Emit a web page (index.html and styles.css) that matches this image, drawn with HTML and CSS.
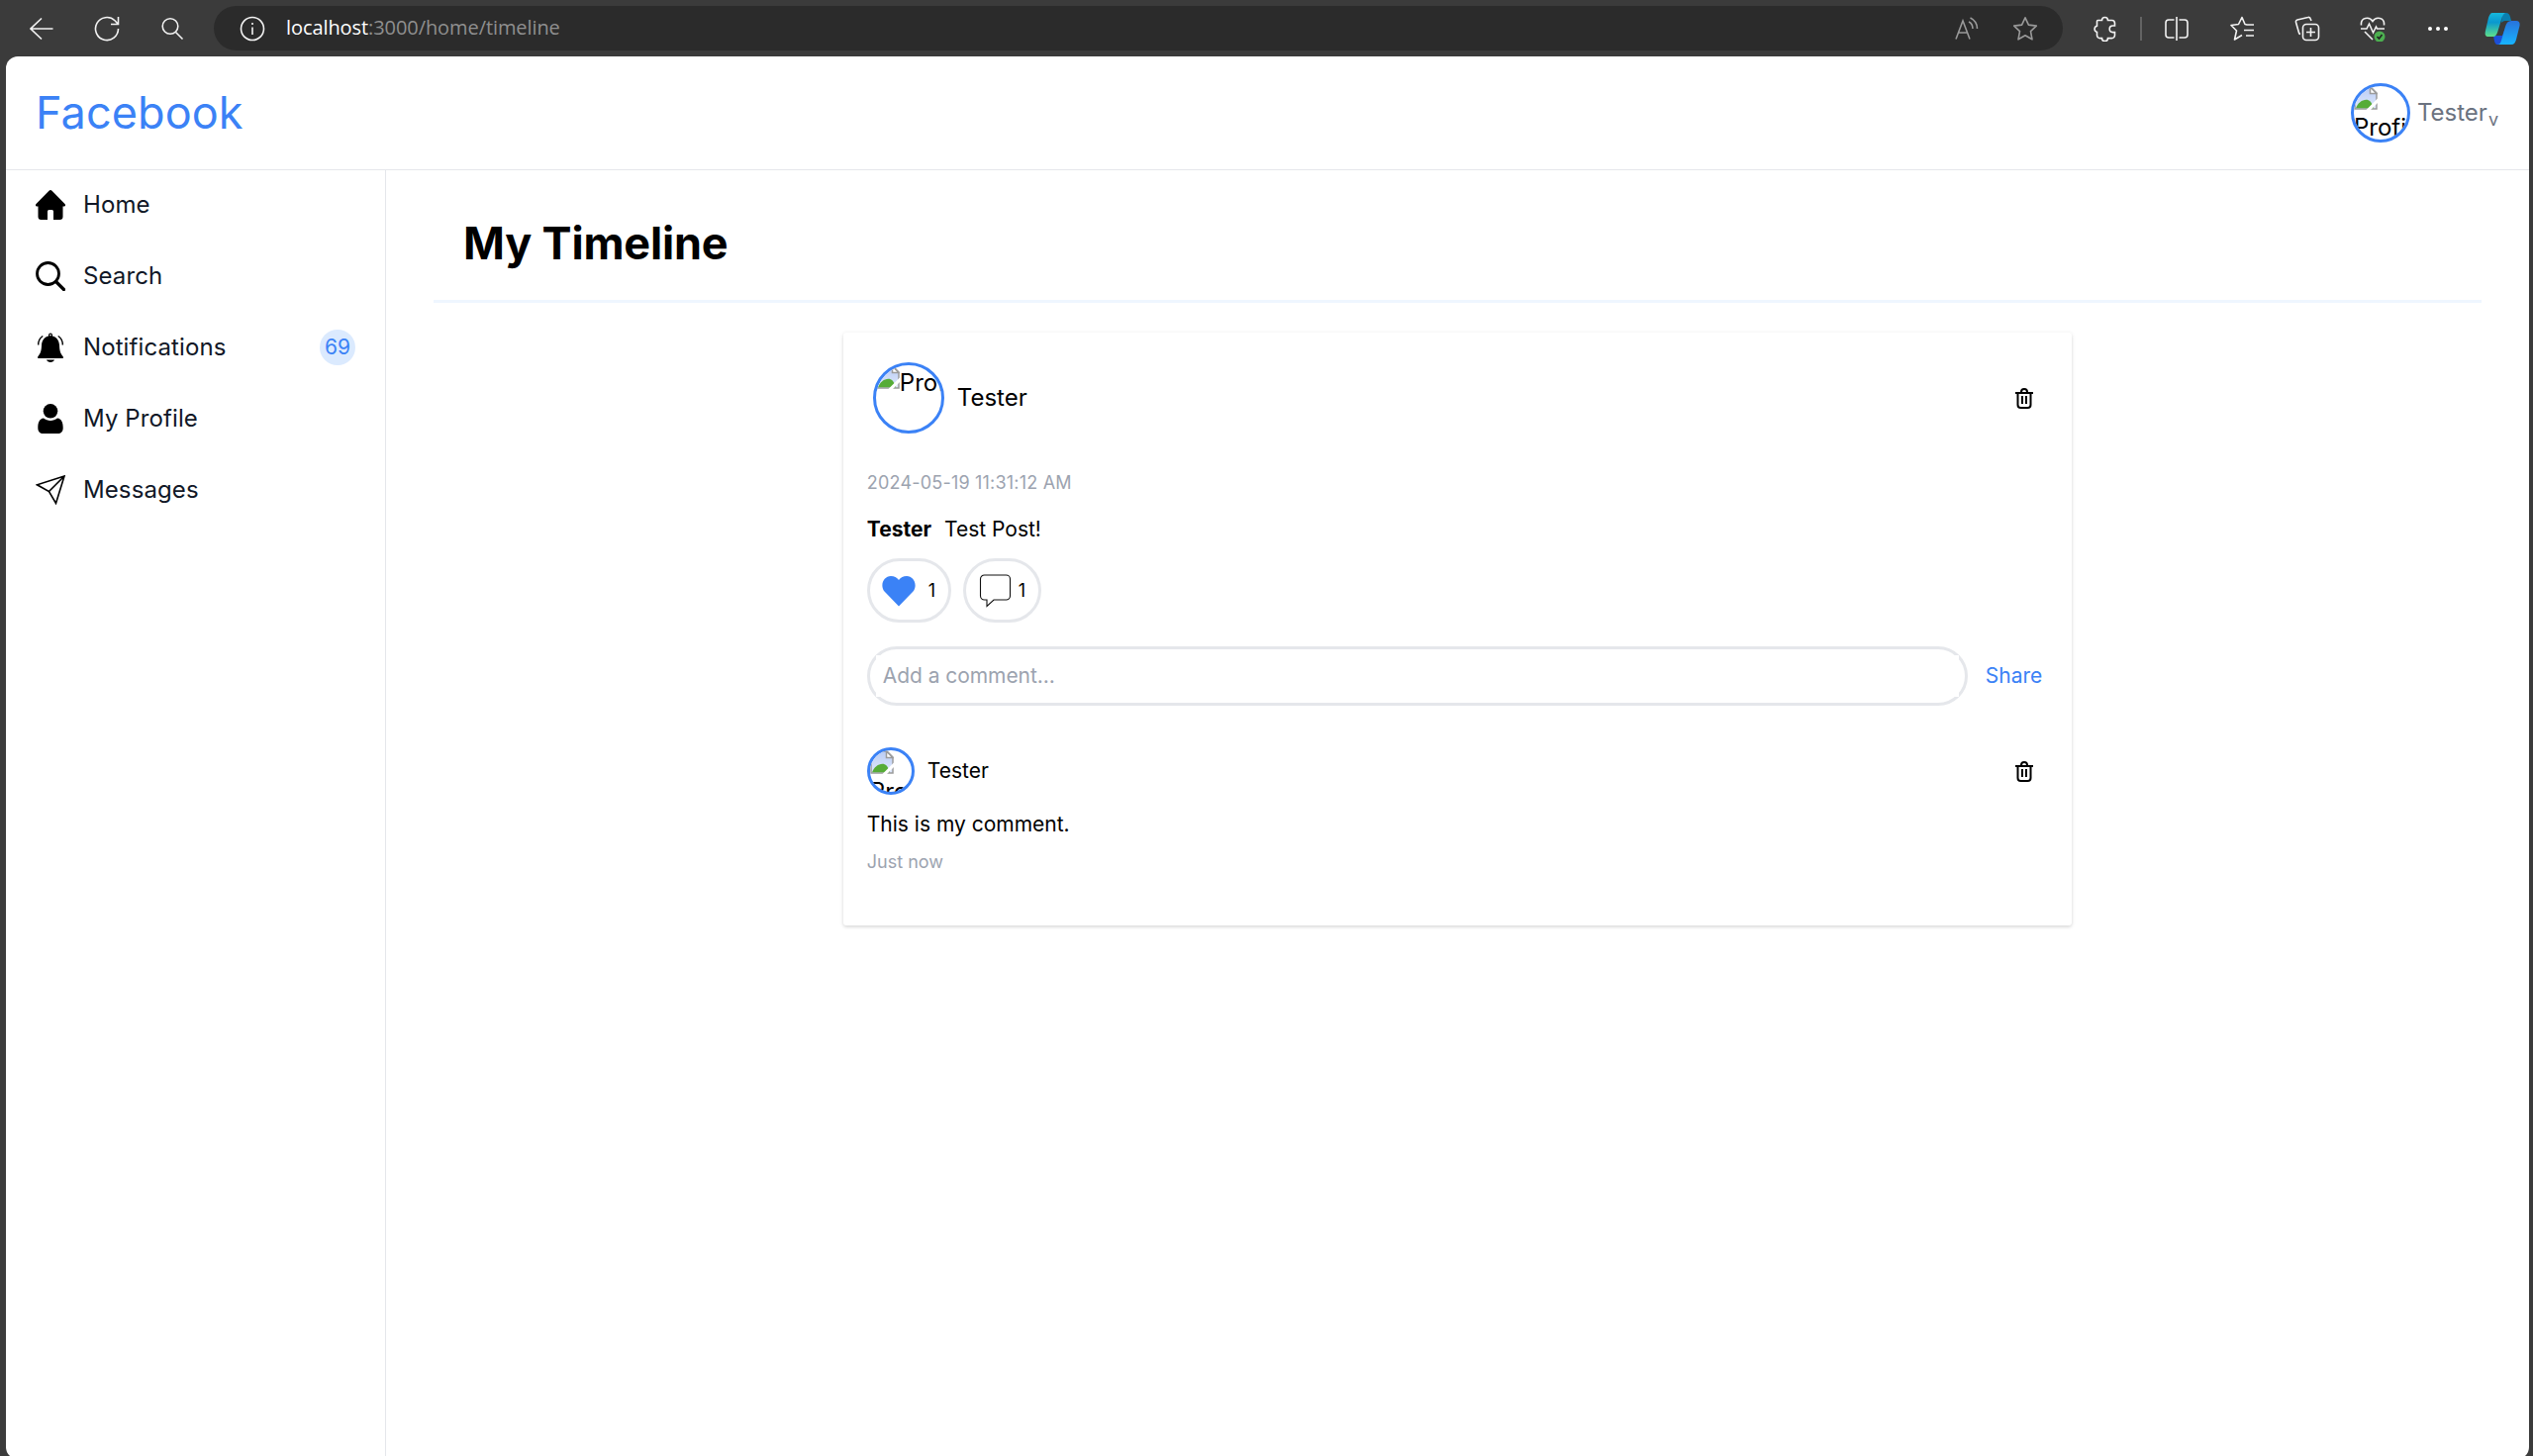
FILE: index.html
```html
<!DOCTYPE html>
<html lang="en">
<head>
<meta charset="utf-8">
<title>My Timeline</title>
<link rel="stylesheet" href="styles.css">
</head>
<body>
<svg class="defs" width="0" height="0">
  <defs>
    <linearGradient id="sky" x1="0" y1="0" x2="0" y2="1"><stop offset="0" stop-color="#b9ccf5"/><stop offset="1" stop-color="#dfe8fb"/></linearGradient>
    <linearGradient id="cpA" x1="0" y1="0" x2="0" y2="1"><stop offset="0" stop-color="#16b8dd"/><stop offset=".4" stop-color="#0a98cf"/><stop offset="1" stop-color="#5fe08a"/></linearGradient>
    <linearGradient id="cpB" x1="0" y1="0" x2="0" y2="1"><stop offset="0" stop-color="#2872dc"/><stop offset="1" stop-color="#17b4ff"/></linearGradient>
    <symbol id="trash" viewBox="0 0 24 24"><g fill="none" stroke="#000" stroke-width="2"><path d="M3 7h18M9 7V6a3 3 0 0 1 6 0v1M5.500 7v12a3 3 0 0 0 3 3h7a3 3 0 0 0 3-3V7M10 10v8M14 10v8"/></g></symbol>
    <symbol id="broken" viewBox="0 0 24 24">
      <path d="M1 1h16l6 6v16H1z" fill="url(#sky)" stroke="#9b9b9b" stroke-width="1.500"/>
      <path d="M16.500 1v6.500H23z" fill="#fff" stroke="#9b9b9b" stroke-width="1.500"/>
      <path d="M2 22.200c2-5 6-8.500 10.500-8.500 3 0 5.500 2 7.500 8.500z" fill="#56ac37"/>
      <path d="M12.500 24 24 12.500V17l-7 7z" fill="#fff"/>
    </symbol>
  </defs>
</svg>
<div class="toolbar">
  <span class="tool"><svg width="24" height="24" viewBox="0 0 24 24"><path d="M23.500 12H1M12 1.500 1 12l11 10.500"/></svg></span>
  <span class="tool"><svg width="26" height="26" viewBox="0 0 26 26"><path d="M24.500 13A11.500 11.500 0 1 1 21 4.800L24 8M24.500 1v7.500H17"/></svg></span>
  <span class="tool"><svg width="24" height="24" viewBox="0 0 24 24"><circle cx="10" cy="9.500" r="7.800"/><path d="m15.500 15.500 7 7"/></svg></span>
  <div class="address">
    <svg class="info" width="26" height="26" viewBox="0 0 26 26"><circle cx="13" cy="13" r="11.500"/><path d="M13 11.500v7.500M13 7v2"/></svg>
    <span class="url"><b>localhost</b>:3000/home/timeline</span>
    <svg class="dim read" width="24" height="24" viewBox="0 0 24 24"><path d="M1 22.500 8 4l7 18.500M3.500 16h9M14 5c3 1.500 4 4 4 7M15.500 1c5 2.500 7 6 7 11"/></svg>
    <svg class="dim star" width="26" height="26" viewBox="0 0 26 26"><path d="m13 1.800 3.400 7.300 7.900 1-5.800 5.500 1.500 8.200-7-4-7 4 1.500-8.200L1.700 10.100l7.900-1z" stroke-linejoin="round"/></svg>
  </div>
  <span class="tool"><svg width="26" height="26" viewBox="0 0 26 26"><path d="M6.500 4.500h4a3 3 0 0 1 6 0h4a3 3 0 0 1 3 3V10h-2a3.300 3.300 0 0 0 0 6.600h2v3a3 3 0 0 1-3 3h-4a3 3 0 0 1-6 0h-2a3 3 0 0 1-3-3v-3.200a3.200 3.200 0 0 1 0-6.200V5.500a1 1 0 0 1 1-1z"/></svg></span>
  <span class="divider"></span>
  <span class="tool"><svg width="26" height="26" viewBox="0 0 26 26"><path d="M13 1v24M10.500 4H5a3 3 0 0 0-3 3v12a3 3 0 0 0 3 3h5.500M15.500 4H21a3 3 0 0 1 3 3v12a3 3 0 0 1-3 3h-5.500"/></svg></span>
  <span class="tool"><svg width="26" height="26" viewBox="0 0 26 26"><path d="m18 9-2-.5-3-7-3.500 7-7.500 1 5.500 5.500L5.500 24l7.500-4.500M17 9h8M15 14.500h10M17 20h8" stroke-linejoin="round"/></svg></span>
  <span class="tool"><svg width="26" height="26" viewBox="0 0 26 26"><rect x="8.500" y="8.500" width="16" height="16" rx="3.500"/><path d="M16.500 12v9M12 16.500h9M17 5l-.8-2a2 2 0 0 0-2.500-1.500L3 4a2 2 0 0 0-1.500 2.500l3 10.500a2 2 0 0 0 1.500 1.500"/></svg></span>
  <span class="tool"><svg width="26" height="26" viewBox="0 0 26 26"><path d="M1.500 9.500C.5 1 10 .5 13 5.500 16 .5 25.500 1 24.500 9.500M1 13h6l2.500-5 4 9 3-6 1 2h7.500M5 16l8 8"/><circle cx="20" cy="21" r="5.500" fill="#4caf50" stroke="none"/><path d="m17.500 21 2 2 3-4" stroke="#222"/></svg></span>
  <span class="tool"><svg width="22" height="6" viewBox="0 0 22 6"><g fill="#fff" stroke="none"><circle cx="3" cy="3" r="2"/><circle cx="11" cy="3" r="2"/><circle cx="19" cy="3" r="2"/></g></svg></span>
  <span class="tool copilot"><svg width="36" height="34" viewBox="0 0 36 34"><g stroke="none"><path d="M9 24h9l3-8-2 17h-6c-2 0-3-2-4-9z" fill="#1d4fd7"/><path d="M18 1h4c2 0 3 1 4 4l1 4h-6c-2 0-3 1-4 2z" fill="#0a7fb0"/><path d="M8 1h13c-2 1-3 3-4 7l-4 13c-1 2-2 4-4 4H4c-3 0-4-2-3-6L4 6c1-3 2-5 4-5z" fill="url(#cpA)"/><path d="M27 9h5c3 0 4 2 3.500 5L32 28c-1 3-2 5-5 5H13c2 0 3-1 4-4l4-14c1-4 3-6 6-6z" fill="url(#cpB)"/></g></svg></span>
</div>
<div class="page">
  <header class="header">
    <span class="brand">Facebook</span>
    <div class="account">
      <span class="avatar md"><svg width="24" height="24"><use href="#broken"/></svg> <span>Profile</span></span>
      <span class="user">Tester</span><span class="caret">v</span>
    </div>
  </header>
  <div class="body">
    <nav class="sidebar">
      <a class="item"><svg width="30" height="30" viewBox="0 0 30 30"><path d="M13.500.8a2.200 2.200 0 0 1 3 0L29.500 14c1 1.200.5 2.500-1 2.500H27.500V27a3 3 0 0 1-3 3H18v-8.500a1.500 1.500 0 0 0-1.500-1.500h-3a1.500 1.500 0 0 0-1.500 1.500V30H5.500a3 3 0 0 1-3-3V16.500H1.500c-1.500 0-2-1.300-1-2.500z"/></svg>Home</a>
      <a class="item"><svg width="30" height="30" viewBox="0 0 30 30"><g fill="none" stroke="#000" stroke-width="2.800"><circle cx="12.500" cy="12.500" r="11"/><path d="m20.500 20.500 8 8" stroke-linecap="round" stroke-width="3.200"/></g></svg>Search</a>
      <a class="item"><svg width="30" height="30" viewBox="0 0 30 30"><path d="M13 3.400V2.500a2 2 0 0 1 4 0v.9c4.500 1 6.800 4.800 7 9.600.2 5.500 1.200 8.500 3.800 11.200V26H2.200v-1.800C4.800 21.500 5.800 18.500 6 13c.2-4.800 2.500-8.600 7-9.600zM11 27.500h8c-.8 3.300-7.200 3.300-8 0z"/><circle cx="15" cy="2.600" r=".8" fill="#fff"/><path d="M7.300 3.500C4 5.500 2.700 8.500 2.700 12.500M22.700 3.500c3.300 2 4.600 5 4.600 9" fill="none" stroke="#000" stroke-width="1.400"/></svg>Notifications<span class="badge">69</span></a>
      <a class="item"><svg width="30" height="30" viewBox="0 0 30 30"><circle cx="15" cy="7.300" r="7.300"/><path d="M8 14.500c4 3.300 10 3.300 14 0 4 .5 5.700 4 5.700 9.500 0 4-2 6-5.500 6H7.800c-3.500 0-5.500-2-5.500-6 0-5.500 1.700-9 5.700-9.500z"/></svg>My Profile</a>
      <a class="item"><svg width="30" height="30" viewBox="0 0 30 30"><path d="M29 1 1.500 9.800 13.500 16.500 20.500 28.500zM29 1 13.500 16.500" fill="none" stroke="#000" stroke-width="1.600"/></svg>Messages</a>
    </nav>
    <main class="main">
      <h1 class="title">My Timeline</h1>
      <article class="card">
        <div class="author">
          <span class="avatar lg"><svg width="24" height="24"><use href="#broken"/></svg><span>Profile</span></span>
          <span class="name">Tester</span>
          <svg class="trash" width="24" height="24"><use href="#trash"/></svg>
        </div>
        <div class="date">2024-05-19 11:31:12 AM</div>
        <div class="text"><b>Tester</b><span>Test Post!</span></div>
        <div class="reactions">
          <span class="pill like"><svg width="36" height="36" viewBox="0 0 36 36"><path d="M18 33.500 3.500 18.500C-1.500 12 3 3 10 3c3.500 0 6 1.500 8 4 2-2.500 4.500-4 8-4 7 0 11.500 9 6.500 15.500z" fill="#3b82f6"/></svg>1</span>
          <span class="pill reply"><svg width="33" height="34" viewBox="0 0 33 34"><path d="M5.500 1h22a4 4 0 0 1 4 4v17a4 4 0 0 1-4 4H15l-7 6.500V26H5.500a4 4 0 0 1-4-4V5a4 4 0 0 1 4-4z" fill="none" stroke="#111" stroke-width="1.100"/></svg>1</span>
        </div>
        <div class="compose">
          <div class="field"><span>Add a comment...</span></div>
          <span class="share">Share</span>
        </div>
        <div class="comment">
          <span class="avatar sm"><svg width="24" height="24"><use href="#broken"/></svg><span>Profile</span></span>
          <span class="name">Tester</span>
          <svg class="trash" width="24" height="24"><use href="#trash"/></svg>
        </div>
        <div class="said">This is my comment.</div>
        <div class="when">Just now</div>
      </article>
    </main>
  </div>
</div>
</body>
</html>
```
FILE: styles.css
```css
* { box-sizing: border-box; }
body {
  margin: 0;
  height: 1471px;
  overflow: hidden;
  background: #3b3b3b;
  color: #000;
  font: 24px/36px Inter, "Liberation Sans", sans-serif;
}
svg { display: block; flex: none; }
.defs { position: absolute; }

.toolbar { display: flex; align-items: center; height: 57px; padding-left: 9px; }
.toolbar svg { fill: none; stroke: #f2f2f2; stroke-width: 1.6; }
.toolbar svg.dim { stroke: #9a9a9a; }
.tool { display: flex; justify-content: center; width: 66px; flex: none; }
.copilot { width: 63px; }
.divider { width: 2px; height: 24px; margin: 0 2px 0 3px; background: #636363; }
.address {
  display: flex;
  align-items: center;
  flex: 1;
  height: 45px;
  margin: 0 9px;
  padding: 0 25px 0 26px;
  border-radius: 23px;
  background: #2b2b2b;
}
.url {
  margin: -2px auto 0 21px;
  color: #8f8f8f;
  font: 20px/30px "Open Sans", "Noto Sans", sans-serif;
  letter-spacing: -.08px;
}
.url b { color: #fff; font-weight: 400; }
.read { margin-right: 34px; }

.page {
  display: flex;
  flex-direction: column;
  width: 2549px;
  height: 1417px;
  margin-left: 6px;
  border-radius: 12px;
  background: #fff;
}
.header {
  display: flex;
  align-items: center;
  justify-content: space-between;
  flex: none;
  height: 115px;
  padding: 0 31px 0 30px;
  border-bottom: 1px solid #e5e7eb;
}
.brand { color: #3b82f6; font-size: 45px; line-height: 54px; letter-spacing: .08px; }
.account { display: flex; align-items: center; color: #6b7280; }
.user { margin-left: 7px; }
.caret { margin: 14px 0 0 1px; font-size: 18px; line-height: 20px; }

.avatar {
  display: block;
  flex: none;
  overflow: hidden;
  border: 3px solid #3b82f6;
  border-radius: 50%;
  color: #000;
  font-size: 24px;
  line-height: 36px;
}
.avatar span { display: block; }
.md { width: 60px; height: 60px; }
.lg { display: flex; width: 72px; height: 72px; }
.sm { width: 48px; height: 48px; }

.body { display: flex; flex: 1; }
.sidebar { width: 384px; margin-top: -1px; border-right: 1px solid #e5e7eb; }
.item { display: flex; align-items: center; height: 72px; padding: 0 30px; gap: 18px; color: #111827; letter-spacing: .1px; }
.item svg { fill: #000; }
.badge {
  width: 36px;
  height: 36px;
  margin-left: auto;
  border-radius: 50%;
  background: #dbeafe;
  color: #3b82f6;
  font-size: 21px;
  line-height: 35px;
  text-align: center;
}

.main { flex: 1; padding: 0 48px; }
.title {
  height: 134px;
  margin: 0 0 30px;
  padding: 47px 30px 0;
  border-bottom: 3px solid #eff6ff;
  font-size: 45px;
  line-height: 54px;
  font-weight: 700;
  letter-spacing: -.18px;
}
.card {
  width: 60%;
  height: 599px;
  margin: 0 auto;
  padding: 30px 24px;
  border-radius: 3px;
  box-shadow: 0 1px 4px rgba(0, 0, 0, .12), 0 2px 3px rgba(0, 0, 0, .06);
  font-size: 21px;
  line-height: 30px;
}
.author { display: flex; align-items: center; padding: 0 12px 0 6px; font-size: 24px; }
.name { margin-left: 13px; }
.trash { margin: 0 0 1px auto; }
.date { margin-top: 38px; color: #9ca3af; font-size: 18px; line-height: 24px; letter-spacing: .2px; }
.text { display: flex; gap: 13px; margin-top: 20px; }
.reactions { display: flex; gap: 12px; margin-top: 14px; font-size: 18px; }
.pill { display: flex; align-items: center; height: 65px; border: 3px solid #e5e7eb; border-radius: 33px; }
.like { width: 85px; padding-left: 11px; gap: 12px; }
.reply { width: 79px; padding-left: 13px; gap: 7px; }
.compose { display: flex; align-items: center; margin-top: 24px; }
.field {
  width: 1112px;
  height: 60px;
  padding: 6px;
  border: 3px solid #e5e7eb;
  border-radius: 30px;
}
.field span {
  display: block;
  height: 42px;
  padding-left: 7px;
  background: #fff;
  color: #9ca3af;
  line-height: 42px;
  letter-spacing: -.06px;
}
.share { margin-left: 18px; color: #3b82f6; }
.comment { display: flex; align-items: center; margin-top: 42px; padding-right: 12px; }
.said { margin-top: 15px; }
.when { margin-top: 11px; color: #9ca3af; font-size: 18px; line-height: 24px; }
```
